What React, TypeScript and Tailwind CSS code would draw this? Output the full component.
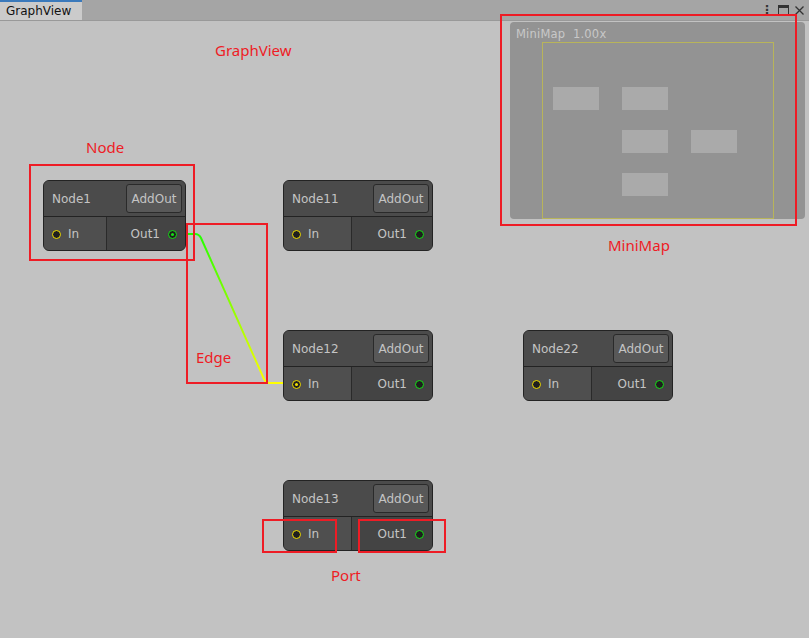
import React from "react";

type NodeData = {
  title: string;
  x: number;
  y: number;
  w: number;
  inW: number;
  inLinked?: boolean;
  outLinked?: boolean;
};

const nodes: NodeData[] = [
  { title: "Node1", x: 43, y: 180, w: 143, inW: 63, outLinked: true },
  { title: "Node11", x: 283, y: 180, w: 150, inW: 68 },
  { title: "Node12", x: 283, y: 330, w: 150, inW: 68, inLinked: true },
  { title: "Node22", x: 523, y: 330, w: 150, inW: 68 },
  { title: "Node13", x: 283, y: 480, w: 150, inW: 68 },
];

const marks = [
  { x: 29, y: 164, w: 166, h: 97 },
  { x: 186, y: 223, w: 82, h: 161 },
  { x: 500, y: 14, w: 297, h: 212 },
  { x: 262, y: 519, w: 75, h: 34 },
  { x: 358, y: 519, w: 88, h: 34 },
];

const labels = [
  { text: "GraphView", x: 215, y: 40 },
  { text: "Node", x: 86, y: 137 },
  { text: "Edge", x: 196, y: 347 },
  { text: "MiniMap", x: 608, y: 235 },
  { text: "Port", x: 331, y: 565 },
];

const miniRects = [
  { x: 553, y: 87 },
  { x: 622, y: 87 },
  { x: 622, y: 130 },
  { x: 691, y: 130 },
  { x: 622, y: 173 },
];

const Dot = ({ color, linked }: { color: string; linked?: boolean }) => (
  <span
    className="flex h-[9px] w-[9px] items-center justify-center rounded-full border-[1.5px] bg-[#1e1e1e]"
    style={{ borderColor: color }}
  >
    {linked && <span className="h-[3px] w-[3px] rounded-full" style={{ background: color }} />}
  </span>
);

const GraphNode = ({ n }: { n: NodeData }) => (
  <div
    className="absolute flex h-[71px] flex-col overflow-hidden rounded-[6px] border border-[#232323] bg-[#444444] text-[12px] text-[#c4c4c4]"
    style={{ left: n.x, top: n.y - 21, width: n.w }}
  >
    <div className="flex h-[36px] items-center justify-between border-b border-[#232323] bg-[#4b4b4b] pl-[8px] pr-[3px]">
      <span>{n.title}</span>
      <div className="flex h-[29px] w-[56px] items-center justify-center rounded-[3px] border border-[#2a2a2a] bg-[#585858]">
        AddOut
      </div>
    </div>
    <div className="flex flex-1">
      <div
        className="flex items-center gap-[7px] border-r border-[#2a2a2a] bg-[#4f4f4f] pl-[8px] pt-[1px]"
        style={{ width: n.inW }}
      >
        <Dot color="#f2e000" linked={n.inLinked} />
        <span>In</span>
      </div>
      <div className="flex flex-1 items-center justify-end gap-[8px] bg-[#444444] pr-[8px] pt-[1px]">
        <span>Out1</span>
        <Dot color="#16e016" linked={n.outLinked} />
      </div>
    </div>
  </div>
);

const App: React.FC = () => {
  return (
    <div
      className="flex h-[638px] w-[809px] flex-col overflow-hidden bg-[#c2c2c2]"
      style={{ fontFamily: "'DejaVu Sans', Verdana, sans-serif" }}
    >
      {/* tab strip */}
      <div className="flex h-[21px] items-stretch justify-between border-b border-[#999999] bg-[#a5a5a5]">
        <div className="flex w-[82px] items-center border-t-2 border-[#3a79bb] bg-[#cbcbcb] pl-[6px] text-[12px] text-[#111111]">
          GraphView
        </div>
        <div className="flex items-center gap-[5px] pr-[4px] text-[#333333]">
          <span className="text-[12px] font-bold leading-none">⋮</span>
          <span className="h-[10px] w-[11px] border border-t-[3px] border-[#333333]" />
          <svg width="11" height="11" viewBox="0 0 11 11">
            <path d="M1.5 1.5 L9.5 9.5 M9.5 1.5 L1.5 9.5" stroke="#333" strokeWidth="1.3" />
          </svg>
        </div>
      </div>

      {/* canvas */}
      <div className="relative flex-1">
        <svg className="absolute left-0 top-0" width="809" height="617">
          <defs>
            <linearGradient id="edge" gradientUnits="userSpaceOnUse" x1="0" y1="213" x2="0" y2="362">
              <stop offset="0" stopColor="#22ff00" />
              <stop offset="1" stopColor="#ffff00" />
            </linearGradient>
          </defs>
          <path
            d="M177 213 L195 213 Q199 213 201 217 L264 358 Q266 362 270 362 L292 362"
            fill="none"
            stroke="url(#edge)"
            strokeWidth="2"
          />
        </svg>

        {nodes.map((n) => (
          <GraphNode key={n.title} n={n} />
        ))}

        {/* minimap */}
        <div className="absolute left-[510px] top-[1px] h-[197px] w-[295px] rounded-[4px] bg-[#939393]">
          <div className="pl-[6px] pt-[4px] text-[11.5px] tracking-[0.2px] text-[#c8c8c8]">MiniMap&nbsp;&nbsp;1.00x</div>
          <div className="absolute left-[32px] top-[20px] h-[177px] w-[232px] border border-[#b8b45a]" />
          {miniRects.map((r, i) => (
            <div
              key={i}
              className="absolute h-[23px] w-[46px] bg-[#aaaaaa]"
              style={{ left: r.x - 510, top: r.y - 22 }}
            />
          ))}
        </div>

        {/* annotations */}
        {marks.map((m, i) => (
          <div
            key={i}
            className="absolute border-2 border-[#ee1c25]"
            style={{ left: m.x, top: m.y - 21, width: m.w, height: m.h }}
          />
        ))}
        {labels.map((l) => (
          <span
            key={l.text}
            className="absolute text-[15px] leading-[20px] text-[#ee1c25]"
            style={{ left: l.x, top: l.y - 21, fontFamily: "'Noto Sans', sans-serif" }}
          >
            {l.text}
          </span>
        ))}
      </div>
    </div>
  );
};

export default App;
